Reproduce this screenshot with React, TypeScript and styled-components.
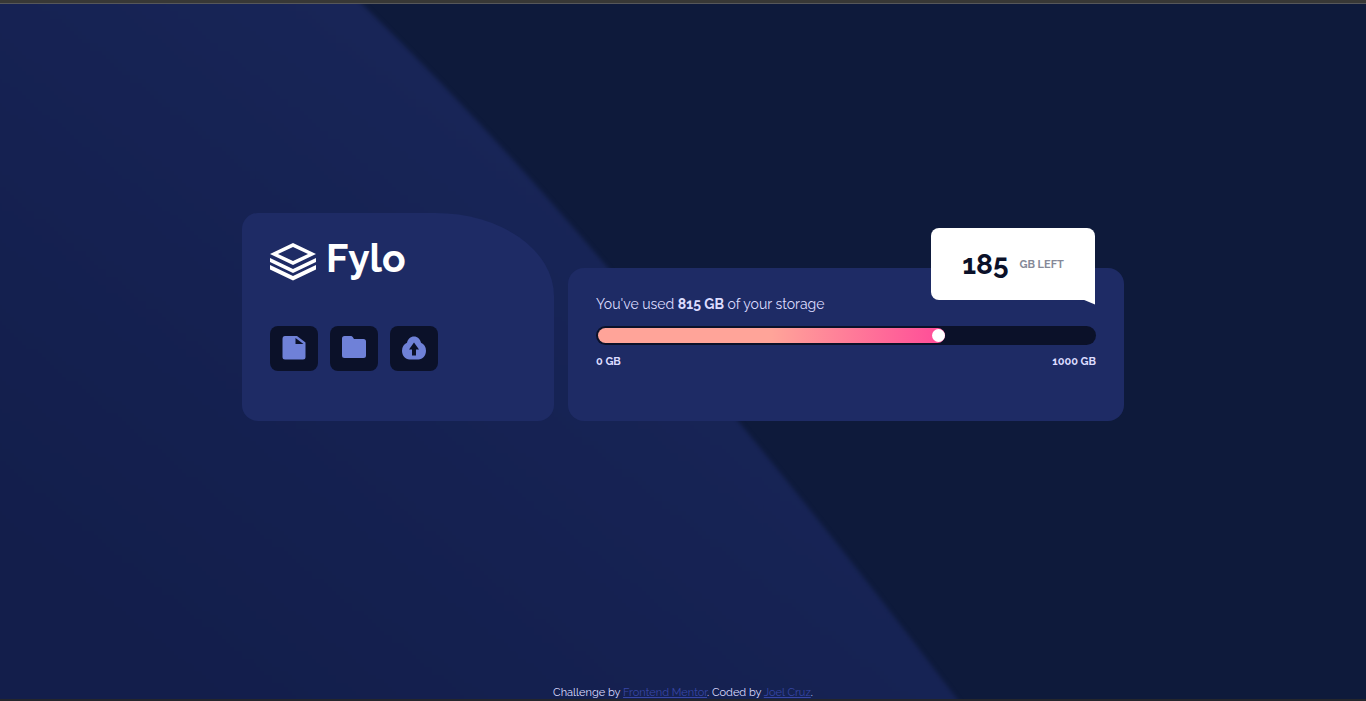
import React from "react";
import styled, { createGlobalStyle } from "styled-components";

const GlobalStyle = createGlobalStyle`
  *, *::before, *::after { box-sizing: border-box; }
  body {
    margin: 0;
    background: #0e1a3b;
    color: #dcdcff;
    font-family: Raleway, Lato, "Open Sans", sans-serif;
  }
  strong { font-weight: 700; }
`;

const Page = styled.div`
  position: relative;
  isolation: isolate;
  display: flex;
  flex-direction: column;
  min-height: 100vh;
  border-bottom: 2px solid #24262c;
`;

const TopStrip = styled.div`
  height: 4px;
  background: #383836;
  border-bottom: 1px solid #56575a;
`;

const Backdrop = styled.svg`
  position: absolute;
  inset: 4px 0 0;
  z-index: -1;
  width: 100%;
  height: calc(100% - 4px);
`;

const Main = styled.main`
  flex: 1;
  display: flex;
  align-items: center;
  justify-content: center;
  padding: 0 24px 58px;
`;

const Cards = styled.div`
  display: grid;
  grid-template-columns: 312fr 556fr;
  align-items: end;
  gap: 14px;
  width: 100%;
  max-width: 882px;
`;

const Card = styled.section`
  background: #1e2b65;
  border-radius: 16px;
`;

const BrandCard = styled(Card)`
  padding: 24px 28px 50px;
  border-top-right-radius: 38% 40%;
`;

const StorageCard = styled(Card)`
  position: relative;
  padding: 26px 28px 51px;
`;

const Brand = styled.h1`
  display: flex;
  align-items: flex-end;
  gap: 10px;
  height: 44px;
  margin: 0 0 45px;
  color: #fff;
  font-size: 39px;
  font-weight: 700;
  line-height: 42px;
`;

const BrandName = styled.span`
  align-self: flex-start;
`;

const Actions = styled.div`
  display: flex;
  gap: 12px;
`;

const IconButton = styled.button`
  display: grid;
  place-items: center;
  width: 48px;
  height: 45px;
  padding: 0;
  border: 0;
  border-radius: 8px;
  background: #0b1129;
  color: #6f81d8;
  cursor: pointer;
`;

const Usage = styled.label`
  display: block;
  margin-bottom: 12px;
  font-size: 14px;
  line-height: 20px;
`;

const Meter = styled.div`
  display: grid;
  align-items: center;
  height: 19px;
  padding: 2px;
  border-radius: 10px;
  background: #0b1129;

  > * { grid-area: 1 / 1; }
`;

const MeterFill = styled.div`
  width: 70%;
  height: 15px;
  border-radius: 8px;
  background: linear-gradient(90deg, #ffa499 50%, #ff4a98);
`;

const MeterInput = styled.input`
  appearance: none;
  width: 100%;
  height: 15px;
  margin: 0;
  background: transparent;
  cursor: pointer;

  &::-webkit-slider-thumb {
    appearance: none;
    width: 13px;
    height: 13px;
    border-radius: 50%;
    background: #fff;
  }
`;

const Scale = styled.div`
  display: flex;
  justify-content: space-between;
  margin-top: 9px;
  font-size: 11px;
  font-weight: 700;
  line-height: 16px;
`;

const Remaining = styled.div`
  position: absolute;
  top: -40px;
  right: 29px;
  display: flex;
  align-items: center;
  justify-content: center;
  gap: 11px;
  width: 164px;
  height: 72px;
  padding-top: 2px;
  border-radius: 8px 8px 0 8px;
  background: #fff;
  color: #858998;
  font-size: 11px;
  font-weight: 700;

  &::after {
    content: "";
    position: absolute;
    top: 100%;
    right: 0;
    width: 12px;
    height: 5px;
    background: #fff;
    clip-path: polygon(0 0, 100% 0, 100% 100%);
  }
`;

const Amount = styled.strong`
  color: #0b1129;
  font-size: 28px;
  line-height: 36px;
`;

const Footer = styled.footer`
  font-size: 11px;
  line-height: 12px;
  text-align: center;
`;

const FooterLink = styled.a`
  color: #3746a6;
`;

const LogoMark = () => (
  <svg width="46" height="38" viewBox="0 0 46 38" fill="currentColor" aria-hidden="true">
    <path fillRule="evenodd" d="M23 0 46 11 23 22 0 11ZM23 4 8 11 23 18 38 11Z" />
    <path d="M0 15 23 26 46 15V19L23 30 0 19Z" />
    <path d="M0 22 23 33 46 22V26.500L23 37.500 0 26.500Z" />
  </svg>
);

const DocumentIcon = () => (
  <svg width="24" height="24" viewBox="0 0 24 24" fill="currentColor" aria-hidden="true">
    <path fillRule="evenodd" d="M3 0H15L23.500 6.500V21Q23.500 23.500 21 23.500H3Q.5 23.500 .5 21V3Q.5 0 3 0ZM13.500 2V8H21.500Z" />
  </svg>
);

const FolderIcon = () => (
  <svg width="24" height="24" viewBox="0 0 24 24" fill="currentColor" aria-hidden="true">
    <path d="M2.500 0H9Q10 0 10.700 1L12 3H21.500Q24 3 24 5.500V19.500Q24 22 21.500 22H2.500Q0 22 0 19.500V2.500Q0 0 2.500 0Z" />
  </svg>
);

const UploadIcon = () => (
  <svg width="24" height="24" viewBox="0 0 24 24" fill="currentColor" aria-hidden="true">
    <path fillRule="evenodd" d="M12 0.500C15.500 .5 18.300 3 19 6.800 22 8.200 24 11 24 14.800 24 20 20.500 23.500 16.500 23.500H7.500C3.500 23.500 0 20 0 14.800 0 11 2 8 5 6.800 5.700 3 8.500 .5 12 .5ZM12 6.500 7 13.500H10V19.500H14V13.500H17Z" />
  </svg>
);

export default function App() {
  return (
    <Page>
      <GlobalStyle />
      <Backdrop viewBox="0 0 1366 695" preserveAspectRatio="none" aria-hidden="true">
        <defs>
          <linearGradient id="slope" gradientUnits="userSpaceOnUse" x1="480" y1="120" x2="80" y2="620">
            <stop offset="0" stopColor="#182557" />
            <stop offset="0.5" stopColor="#152151" />
            <stop offset="1" stopColor="#131e4b" />
          </linearGradient>
          <filter id="soft" colorInterpolationFilters="sRGB">
            <feGaussianBlur stdDeviation="2" />
          </filter>
        </defs>
        <path
          d="M-20-20H340L362 0Q488 122 608 264 677 343 738 417 850 553 957 695L975 720H-20Z"
          fill="url(#slope)"
          filter="url(#soft)"
        />
      </Backdrop>
      <TopStrip />
      <Main>
        <Cards>
          <BrandCard>
            <Brand>
              <LogoMark />
              <BrandName>Fylo</BrandName>
            </Brand>
            <Actions>
              <IconButton type="button" aria-label="Documents">
                <DocumentIcon />
              </IconButton>
              <IconButton type="button" aria-label="Folders">
                <FolderIcon />
              </IconButton>
              <IconButton type="button" aria-label="Upload">
                <UploadIcon />
              </IconButton>
            </Actions>
          </BrandCard>
          <StorageCard>
            <Usage htmlFor="storage">
              You've used <strong>815 GB</strong> of your storage
            </Usage>
            <Meter>
              <MeterFill />
              <MeterInput id="storage" type="range" min={0} max={1000} defaultValue={692} />
            </Meter>
            <Scale>
              <span>0 GB</span>
              <span>1000 GB</span>
            </Scale>
            <Remaining>
              <Amount>185</Amount>
              <span>GB LEFT</span>
            </Remaining>
          </StorageCard>
        </Cards>
      </Main>
      <Footer>
        Challenge by <FooterLink href="#frontend-mentor">Frontend Mentor</FooterLink>. Coded by{" "}
        <FooterLink href="#joel-cruz">Joel Cruz</FooterLink>.
      </Footer>
    </Page>
  );
}
